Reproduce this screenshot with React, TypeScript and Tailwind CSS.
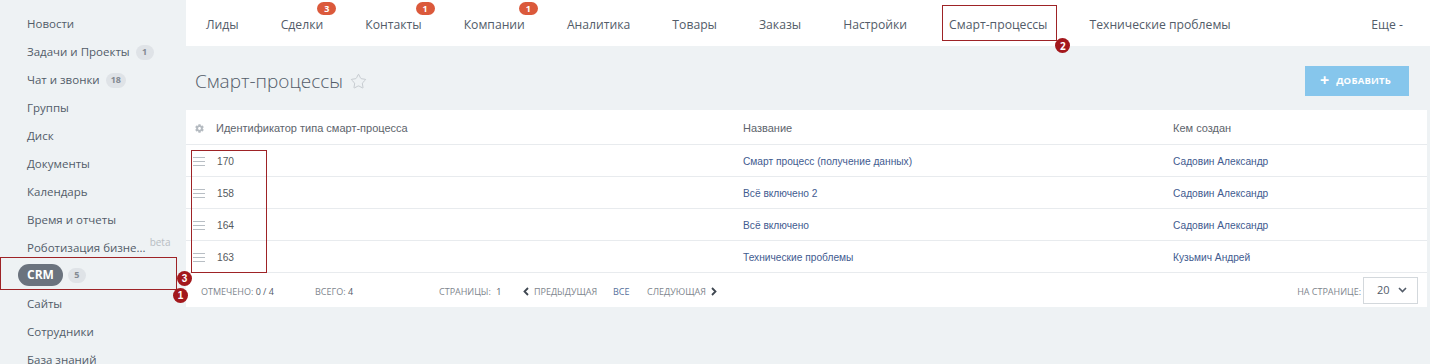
import React from "react";
import { Star } from "lucide-react";
import { FaCog } from "react-icons/fa";

const sidebar: { t: string; c?: string; beta?: boolean; crm?: boolean }[] = [
  { t: "Новости" },
  { t: "Задачи и Проекты", c: "1" },
  { t: "Чат и звонки", c: "18" },
  { t: "Группы" },
  { t: "Диск" },
  { t: "Документы" },
  { t: "Календарь" },
  { t: "Время и отчеты" },
  { t: "Роботизация бизне...", beta: true },
  { t: "CRM", crm: true, c: "5" },
  { t: "Сайты" },
  { t: "Сотрудники" },
  { t: "База знаний" },
];

const nav: { t: string; b?: string; boxed?: boolean }[] = [
  { t: "Лиды" },
  { t: "Сделки", b: "3" },
  { t: "Контакты", b: "1" },
  { t: "Компании", b: "1" },
  { t: "Аналитика" },
  { t: "Товары" },
  { t: "Заказы" },
  { t: "Настройки" },
  { t: "Смарт-процессы", boxed: true },
  { t: "Технические проблемы" },
];

const rows = [
  { id: "170", name: "Смарт процесс (получение данных)", by: "Садовин Александр" },
  { id: "158", name: "Всё включено 2", by: "Садовин Александр" },
  { id: "164", name: "Всё включено", by: "Садовин Александр" },
  { id: "163", name: "Технические проблемы", by: "Кузьмич Андрей" },
];

function Marker({ n, className }: { n: string; className: string }) {
  return (
    <div
      className={
        "absolute w-[15px] h-[15px] rounded-full bg-[#a3181c] text-white text-[10px] font-bold flex items-center justify-center leading-none z-20 " +
        className
      }
    >
      {n}
    </div>
  );
}

function Hamburger() {
  return (
    <svg width="12" height="9" viewBox="0 0 12 9" className="shrink-0">
      <rect x="0" y="0" width="12" height="1" fill="#b8bec4" />
      <rect x="0" y="4" width="12" height="1" fill="#b8bec4" />
      <rect x="0" y="8" width="12" height="1" fill="#b8bec4" />
    </svg>
  );
}

function Chev({ dir }: { dir: "l" | "r" }) {
  return (
    <svg width="6" height="9" viewBox="0 0 6 9" className="shrink-0">
      <path
        d={dir === "l" ? "M5 1 L1.5 4.5 L5 8" : "M1 1 L4.5 4.5 L1 8"}
        stroke="#3e4650"
        strokeWidth="1.8"
        fill="none"
      />
    </svg>
  );
}

export default function App() {
  return (
    <div
      className="w-[1430px] h-[364px] bg-[#eef2f4] flex overflow-hidden relative"
      style={{ fontFamily: "'Open Sans', 'Liberation Sans', sans-serif" }}
    >
      {/* Sidebar */}
      <div className="w-[186px] shrink-0 pt-[10px] flex flex-col">
        {sidebar.map((s, i) => (
          <div key={i} className="h-[28px] shrink-0 flex items-center relative">
            {s.crm ? (
              <>
                <div className="absolute left-0 top-[-5px] w-[177px] h-[33px] border-[1.5px] border-[#9e2326] z-10" />
                <div className="ml-[18px] h-[22px] px-[9px] rounded-full bg-[#6b737e] text-white text-[12px] font-bold flex items-center mt-[-2px]">
                  CRM
                </div>
                <span className="ml-[5px] h-[15px] min-w-[18px] px-[5px] rounded-full bg-[#dfe3e7] text-[#838a92] text-[9px] font-bold flex items-center justify-center mt-[-2px]">
                  {s.c}
                </span>
              </>
            ) : (
              <>
                <span className="pl-[27px] text-[11.5px] text-[#525c69] whitespace-nowrap">{s.t}</span>
                {s.c && (
                  <span className="ml-[6px] h-[15px] min-w-[18px] px-[5px] rounded-full bg-[#dfe3e7] text-[#838a92] text-[9px] font-bold flex items-center justify-center">
                    {s.c}
                  </span>
                )}
                {s.beta && (
                  <span className="ml-[4px] self-start mt-[1px] text-[10px] text-[#b8bdc3]">beta</span>
                )}
              </>
            )}
          </div>
        ))}
      </div>

      {/* Main */}
      <div className="flex-1 flex flex-col">
        {/* Top nav */}
        <div className="h-[46px] shrink-0 bg-white flex items-center relative">
          {nav.map((n, i) => (
            <div key={i} className="relative px-[21px] h-full flex items-center first:pl-[20px]">
              {n.boxed && (
                <>
                  <div className="absolute left-[14px] right-[11px] top-[5px] bottom-[5px] border-[1.5px] border-[#9e2326]" />
                  <Marker n="2" className="right-[-2px] top-[38px]" />
                </>
              )}
              <span className="relative text-[12.2px] text-[#535c69] whitespace-nowrap pt-[4px]">
                {n.t}
                {n.b && (
                  <span className="absolute right-[-13px] top-[-10px] w-[19px] h-[13px] rounded-full bg-[#db593b] text-white text-[9px] font-bold flex items-center justify-center leading-none">
                    {n.b}
                  </span>
                )}
              </span>
            </div>
          ))}
          <div className="ml-auto pr-[27px] pt-[4px] text-[12.2px] text-[#535c69]">Еще -</div>
        </div>

        <div className="pr-[3px] flex flex-col">
          {/* Title row */}
          <div className="h-[64px] shrink-0 pt-[20px] pl-[9px] pr-[18px] flex items-start">
            <div className="h-[30px] flex items-center">
              <span className="text-[19px] font-light text-[#535c69] leading-none">Смарт-процессы</span>
              <Star size={17} strokeWidth={1} className="ml-[7px] text-[#b5bbc1] mt-[1px]" />
            </div>
            <div className="ml-auto h-[30px] w-[104px] bg-[#86c6ec] flex items-center pl-[15px] text-white">
              <span className="text-[16px] font-bold leading-none mr-[7px] mt-[-2px]">+</span>
              <span className="text-[9.5px] font-bold tracking-[0.2px]">ДОБАВИТЬ</span>
            </div>
          </div>

          {/* Table */}
          <div className="bg-white relative" style={{ fontFamily: "'Liberation Sans', Arial, sans-serif" }}>
            <div className="absolute left-[5px] top-[40px] w-[76px] h-[123px] border-[1.5px] border-[#9e2326] z-10" />
            <Marker n="3" className="left-[-9px] top-[161px]" />
            <Marker n="1" className="left-[-13px] top-[178px]" />

            <div className="h-[35px] pt-[2px] grid grid-cols-[557px_430px_1fr] items-center border-b border-[#e8ebee] text-[11px] text-[#5d646c]">
              <div className="flex items-center pl-[9px]">
                <FaCog size={9} className="text-[#b5bbc1]" />
                <span className="ml-[12px]">Идентификатор типа смарт-процесса</span>
              </div>
              <div>Название</div>
              <div>Кем создан</div>
            </div>
            {rows.map((r) => (
              <div
                key={r.id}
                className="h-[32px] pt-[2px] grid grid-cols-[557px_430px_1fr] items-center border-b border-[#e8ebee] text-[10.2px]"
              >
                <div className="flex items-center pl-[7px]">
                  <Hamburger />
                  <span className="ml-[12px] text-[#55595e]">{r.id}</span>
                </div>
                <div className="text-[#3f5b8f]">{r.name}</div>
                <div className="text-[#3f5b8f]">{r.by}</div>
              </div>
            ))}
            {/* Footer */}
            <div
              className="h-[34px] flex items-center pl-[15px] pr-[9px] text-[9px] text-[#80868e] uppercase"
              style={{ fontFamily: "'Open Sans', sans-serif" }}
            >
              <div className="w-[114px] pt-[3px]">
                Отмечено: <span className="text-[#535c69]">0 / 4</span>
              </div>
              <div className="w-[124px] pt-[3px]">
                Всего: <span className="text-[#535c69]">4</span>
              </div>
              <div className="w-[84px] pt-[3px]">
                Страницы: <span className="text-[#535c69] ml-[3px]">1</span>
              </div>
              <div className="w-[90px] flex items-center gap-[5px] pt-[3px]">
                <Chev dir="l" />
                <span>Предыдущая</span>
              </div>
              <div className="w-[34px] text-[#56709c] pt-[3px]">Все</div>
              <div className="flex items-center gap-[5px] pt-[3px]">
                <span>Следующая</span>
                <Chev dir="r" />
              </div>
              <div className="ml-auto flex items-center">
                <span className="pt-[3px]">На странице:</span>
                <div className="ml-[2px] w-[55px] h-[27px] border border-[#d3d8dc] bg-white flex items-center pl-[13px] pr-[10px] text-[11px] text-[#535c69]">
                  20
                  <svg width="9" height="6" viewBox="0 0 9 6" className="ml-auto">
                    <path d="M1 1 L4.5 4.5 L8 1" stroke="#535c69" strokeWidth="1.6" fill="none" />
                  </svg>
                </div>
              </div>
            </div>
          </div>
        </div>
      </div>
    </div>
  );
}
